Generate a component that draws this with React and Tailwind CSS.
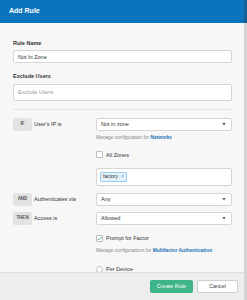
import React from "react";

const font = { fontFamily: '"Liberation Sans", Arial, sans-serif' };

function Caret() {
    return (
        <svg width="4" height="3" viewBox="0 0 4 3" className="shrink-0">
            <path d="M0.3 0h3.4L2 2.6z" fill="#555" />
        </svg>
    );
}

function Select({ value }) {
    return (
        <div className="flex h-[13px] w-[136px] items-center justify-between rounded-[2px] border border-[#d5d5d5] bg-white pl-[4px] pr-[5px] text-[5.5px] text-[#333]">
            <span>{value}</span>
            <Caret />
        </div>
    );
}

function Badge({ children }) {
    return (
        <div className="flex h-[13px] w-[19px] shrink-0 items-center justify-center rounded-[2px] bg-[#e3e3e3] text-[4.5px] font-bold text-[#555]">
            {children}
        </div>
    );
}

function Row({ badge, label, value }) {
    return (
        <div className="flex items-center">
            <div className="flex w-[83px] items-center gap-[2px]">
                <Badge>{badge}</Badge>
                <span className="text-[5.5px] text-[#333]">{label}</span>
            </div>
            <Select value={value} />
        </div>
    );
}

function Checkbox({ checked, label }) {
    return (
        <div className="flex items-center gap-[3px]">
            <div className="flex h-[7px] w-[7px] items-center justify-center rounded-[1px] border border-[#bdbdbd] bg-white">
                {checked && (
                    <svg width="6" height="5" viewBox="0 0 6 5">
                        <path d="M0.6 2.6L2.2 4.2L5.4 0.6" fill="none" stroke="#3aa876" strokeWidth="1" />
                    </svg>
                )}
            </div>
            <span className="text-[5.5px] text-[#333]">{label}</span>
        </div>
    );
}

function Help({ text, link }) {
    return (
        <p className="text-[4.8px] text-[#888]">
            {text} <span className="font-semibold text-[#1a72b8]">{link}</span>
        </p>
    );
}

export default function App() {
    return (
        <div style={font} className="flex h-[300px] w-[247px] overflow-hidden bg-[#dadada]">
            <div className="flex h-full w-[244px] shrink-0 flex-col bg-[#f7f7f7]">
                <div className="flex h-[23px] shrink-0 items-center bg-[#0b74bf] pl-[9px] text-[7px] font-semibold text-white">
                    Add Rule
                </div>

                <div className="flex-1 overflow-hidden pl-[13px] pr-[12px] pt-[16px]">
                    <p className="text-[5.5px] font-bold text-[#333]">Rule Name</p>
                    <div className="mt-[3px] flex h-[13px] items-center rounded-[2px] border border-[#d5d5d5] bg-white px-[4px] text-[5.5px] text-[#333]">
                        Not In Zone
                    </div>

                    <p className="mt-[9px] text-[5.5px] font-bold text-[#333]">Exclude Users</p>
                    <div className="mt-[3px] flex h-[17px] items-center rounded-[2px] border border-[#d5d5d5] bg-white px-[4px] text-[5.5px] text-[#999]">
                        Exclude Users
                    </div>

                    <div className="mt-[8px] border-t border-[#e2e2e2]" />

                    <div className="mt-[8px]">
                        <Row badge="IF" label="User's IP is" value="Not in zone" />
                    </div>
                    <div className="ml-[83px] mt-[3px]">
                        <Help text="Manage configuration for" link="Networks" />
                        <div className="mt-[10px]">
                            <Checkbox label="All Zones" />
                        </div>
                        <div className="mt-[9px] flex h-[18px] items-center rounded-[2px] border border-[#d5d5d5] bg-white px-[3px]">
                            <div className="flex h-[10px] items-center gap-[3px] rounded-[1px] border border-[#9ccbec] bg-[#e4f2fc] px-[2px] text-[5px] text-[#333]">
                                factory
                                <span className="text-[5px] text-[#5a9fd4]">×</span>
                            </div>
                        </div>
                    </div>

                    <div className="mt-[7px]">
                        <Row badge="AND" label="Authenticates via" value="Any" />
                    </div>
                    <div className="mt-[6px]">
                        <Row badge="THEN" label="Access is" value="Allowed" />
                    </div>
                    <div className="ml-[83px] mt-[9px]">
                        <Checkbox checked label="Prompt for Factor" />
                        <div className="mt-[5px]">
                            <Help text="Manage configurations for" link="Multifactor Authentication" />
                        </div>
                        <div className="mt-[11px] flex items-center gap-[3px]">
                            <div className="h-[7px] w-[7px] rounded-full border border-[#bdbdbd] bg-white" />
                            <span className="text-[5.5px] text-[#333]">Per Device</span>
                        </div>
                    </div>
                </div>

                <div className="flex h-[28px] shrink-0 items-center justify-end gap-[4px] border-t border-[#dcdcdc] bg-[#ededed] pr-[6px]">
                    <button className="flex h-[13px] w-[43px] items-center justify-center rounded-[2px] bg-[#3eb489] text-[5.5px] text-white">
                        Create Rule
                    </button>
                    <button className="flex h-[13px] w-[41px] items-center justify-center rounded-[2px] border border-[#cfcfcf] bg-white text-[5.5px] text-[#444]">
                        Cancel
                    </button>
                </div>
            </div>
            <div className="flex flex-1 flex-col">
                <div className="h-[23px] bg-[#185f94]" />
                <div className="flex-1 bg-[#d4d4d4]" />
            </div>
        </div>
    );
}
